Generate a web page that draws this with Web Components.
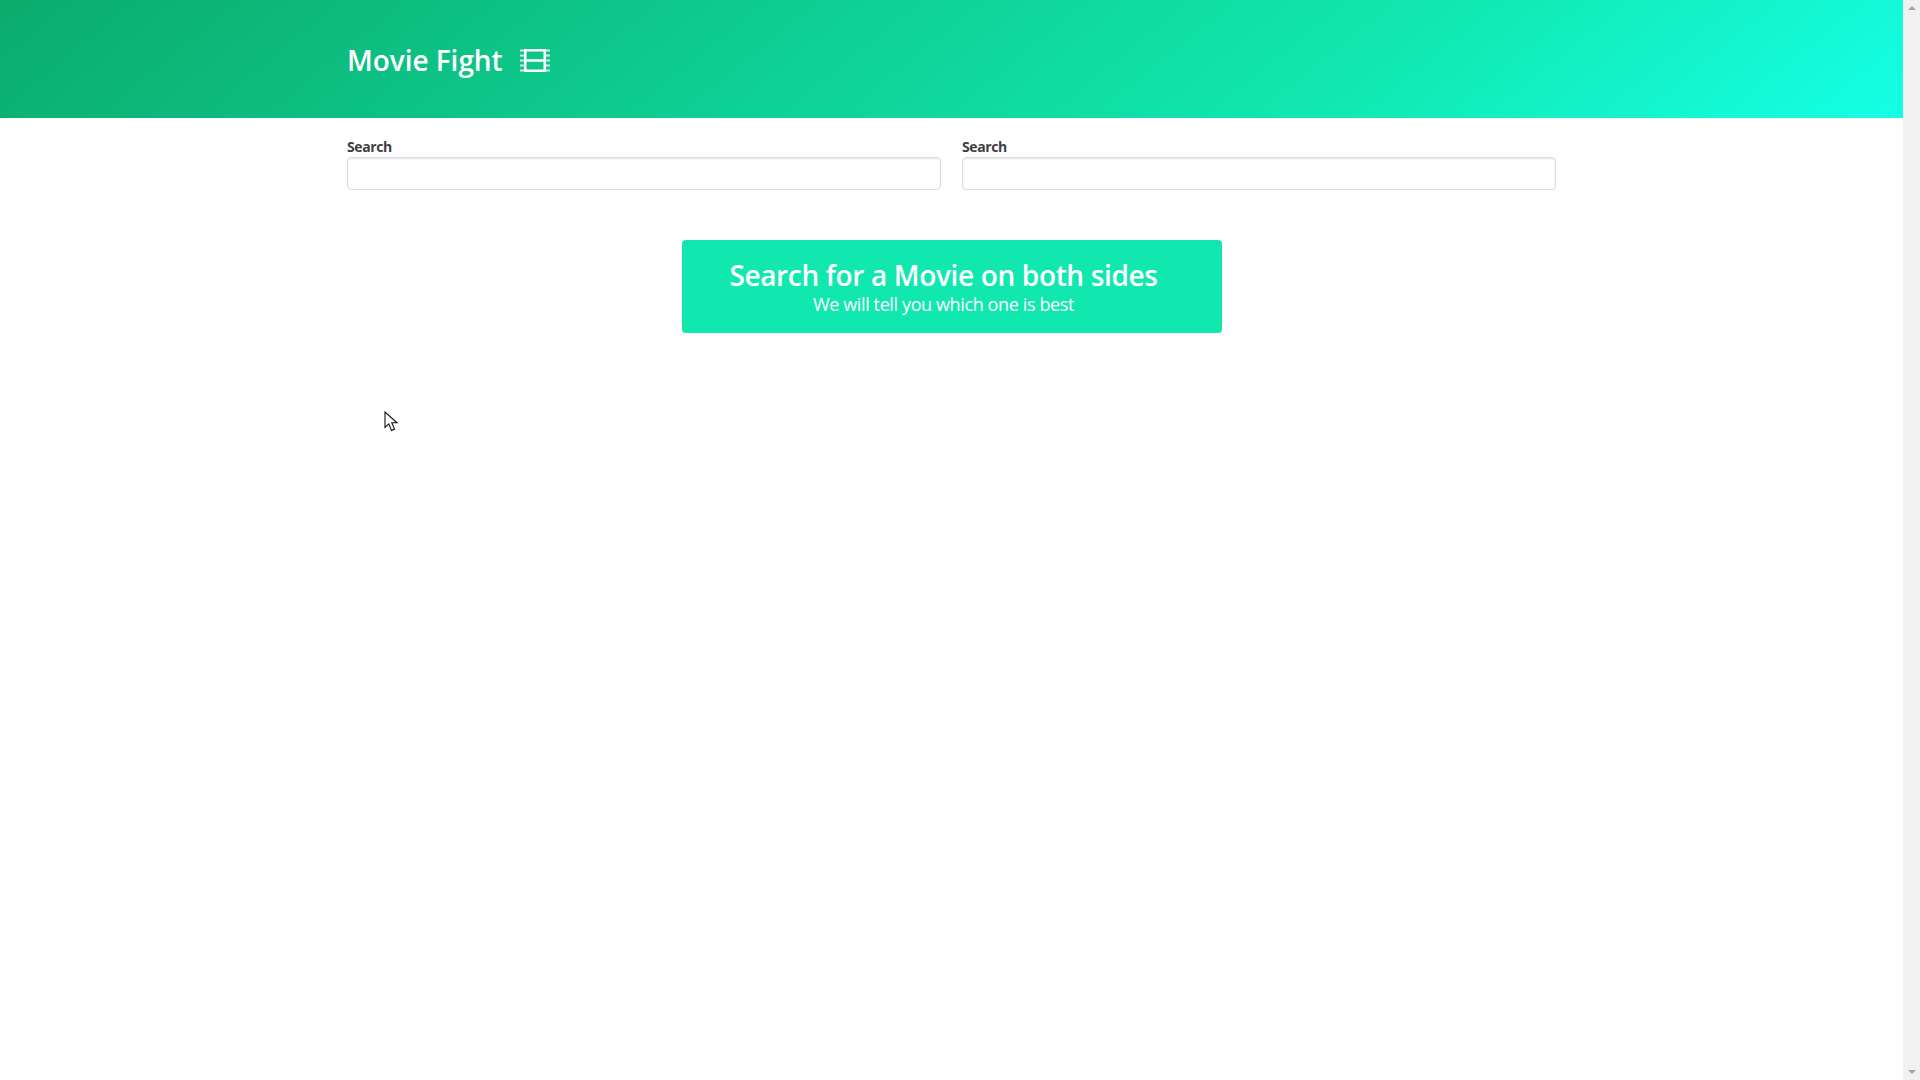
<!DOCTYPE html>
<html lang="en">
<head>
<meta charset="utf-8">
<title>Movie Fight</title>
<style>
  html, body { margin: 0; height: 100%; overflow: hidden; background: #fff; }
  body { display: flex; font-family: "Open Sans", sans-serif; }
</style>
</head>
<body>
<app-page>
  <hero-bar title="Movie Fight"></hero-bar>
  <search-row>
    <search-field label="Search"></search-field>
    <search-field label="Search"></search-field>
  </search-row>
  <tutorial-note heading="Search for a Movie on both sides" sub="We will tell you which one is best"></tutorial-note>
</app-page>
<fake-scrollbar></fake-scrollbar>
<mouse-pointer></mouse-pointer>

<script>
// Page column, takes everything left of the scrollbar
class AppPage extends HTMLElement {
  constructor() {
    super();
    this.attachShadow({ mode: 'open' });
    this.shadowRoot.innerHTML = `
      <style>
        :host { display: flex; flex-direction: column; flex: 1; min-width: 0; }
      </style>
      <slot></slot>
    `;
  }
}

class HeroBar extends HTMLElement {
  constructor() {
    super();
    this.attachShadow({ mode: 'open' });
    this.shadowRoot.innerHTML = `
      <style>
        :host {
          display: flex;
          align-items: center;
          height: 118px;
          padding: 2px 0 0 347px;
          box-sizing: border-box;
          color: #fff;
          background: linear-gradient(141deg, #0bac6c 0%, #11e8b0 71%, #15ffe6 100%);
        }
        h1 {
          margin: 0;
          font-size: 28px;
          font-weight: 600;
          line-height: 1;
          letter-spacing: -0.05px;
        }
        svg { display: block; margin-left: 17px; width: 30px; height: 23px; }
      </style>
      <h1>${this.getAttribute('title')}</h1>
      <svg viewBox="0 0 30 23" fill="#fff" aria-hidden="true">
        <path d="M4 0h22v23H4zM6.5 2.5v7.7h17V2.5zM6.5 12.8v7.7h17v-7.7z" fill-rule="evenodd"/>
        <path fill-opacity=".8" d="M0 .5h4v2H0zM0 5.5h4v2H0zM0 10.5h4v2H0zM0 15.5h4v2H0zM0 20.5h4v2H0z"/>
        <path fill-opacity=".8" d="M26 .5h4v2h-4zM26 5.5h4v2h-4zM26 10.5h4v2h-4zM26 15.5h4v2h-4zM26 20.5h4v2h-4z"/>
      </svg>
    `;
  }
}

class SearchRow extends HTMLElement {
  constructor() {
    super();
    this.attachShadow({ mode: 'open' });
    this.shadowRoot.innerHTML = `
      <style>
        :host {
          display: grid;
          grid-template-columns: 594px 594px;
          column-gap: 21px;
          padding: 20px 0 0 347px;
        }
      </style>
      <slot></slot>
    `;
  }
}

class SearchField extends HTMLElement {
  constructor() {
    super();
    this.attachShadow({ mode: 'open' });
    this.shadowRoot.innerHTML = `
      <style>
        :host { display: block; }
        label {
          display: block;
          font-size: 14px;
          font-weight: 700;
          line-height: 18px;
          color: #3d3d42;
          margin-bottom: 1px;
          letter-spacing: -0.4px;
        }
        input {
          display: block;
          width: 100%;
          height: 33px;
          box-sizing: border-box;
          border: 1px solid #dbdbdb;
          border-radius: 4px;
          box-shadow: inset 0 1px 2px rgba(10, 10, 10, 0.1);
          outline: none;
          padding: 0 8px;
        }
      </style>
      <label>${this.getAttribute('label')}</label>
      <input type="text">
    `;
  }
}

class TutorialNote extends HTMLElement {
  constructor() {
    super();
    this.attachShadow({ mode: 'open' });
    this.shadowRoot.innerHTML = `
      <style>
        :host {
          display: block;
          align-self: center;
          width: 540px;
          height: 93px;
          margin-top: 50px;
          /* same lopsided padding as a notification box */
          padding: 17px 40px 0 24px;
          box-sizing: border-box;
          background: #11e8b0;
          border-radius: 4px;
          color: #fff;
          text-align: center;
        }
        h2 { margin: 0; font-size: 28px; font-weight: 600; line-height: 36px; letter-spacing: -0.35px; white-space: nowrap; }
        p { margin: 0; font-size: 18px; line-height: 22px; letter-spacing: -0.38px; white-space: nowrap; }
      </style>
      <h2>${this.getAttribute('heading')}</h2>
      <p>${this.getAttribute('sub')}</p>
    `;
  }
}

class FakeScrollbar extends HTMLElement {
  constructor() {
    super();
    this.attachShadow({ mode: 'open' });
    this.shadowRoot.innerHTML = `
      <style>
        :host {
          display: flex;
          flex-direction: column;
          justify-content: space-between;
          align-items: center;
          flex: 0 0 17px;
          height: 100vh;
          padding: 6px 0;
          box-sizing: border-box;
          background: #f1f1f1;
        }
        i { display: block; width: 0; height: 0; border: 4px solid transparent; }
        .up { border-top: 0; border-bottom: 4px solid #a3a3a3; }
        .down { border-bottom: 0; border-top: 4px solid #a3a3a3; }
      </style>
      <i class="up"></i>
      <i class="down"></i>
    `;
  }
}

// The captured mouse arrow, lies over the page
class MousePointer extends HTMLElement {
  constructor() {
    super();
    this.attachShadow({ mode: 'open' });
    this.shadowRoot.innerHTML = `
      <style>
        :host { position: absolute; left: 384px; top: 411px; width: 15px; height: 22px; }
        svg { display: block; }
      </style>
      <svg width="15" height="22" viewBox="0 0 15 22" fill="#fff" stroke="#111" stroke-width="1.1" aria-hidden="true">
        <path d="M1 1v15.5l3.8-3.6 2.7 6.5 3-1.3-2.7-6.3h5.2z"/>
      </svg>
    `;
  }
}

customElements.define('app-page', AppPage);
customElements.define('hero-bar', HeroBar);
customElements.define('search-row', SearchRow);
customElements.define('search-field', SearchField);
customElements.define('tutorial-note', TutorialNote);
customElements.define('fake-scrollbar', FakeScrollbar);
customElements.define('mouse-pointer', MousePointer);
</script>
</body>
</html>
